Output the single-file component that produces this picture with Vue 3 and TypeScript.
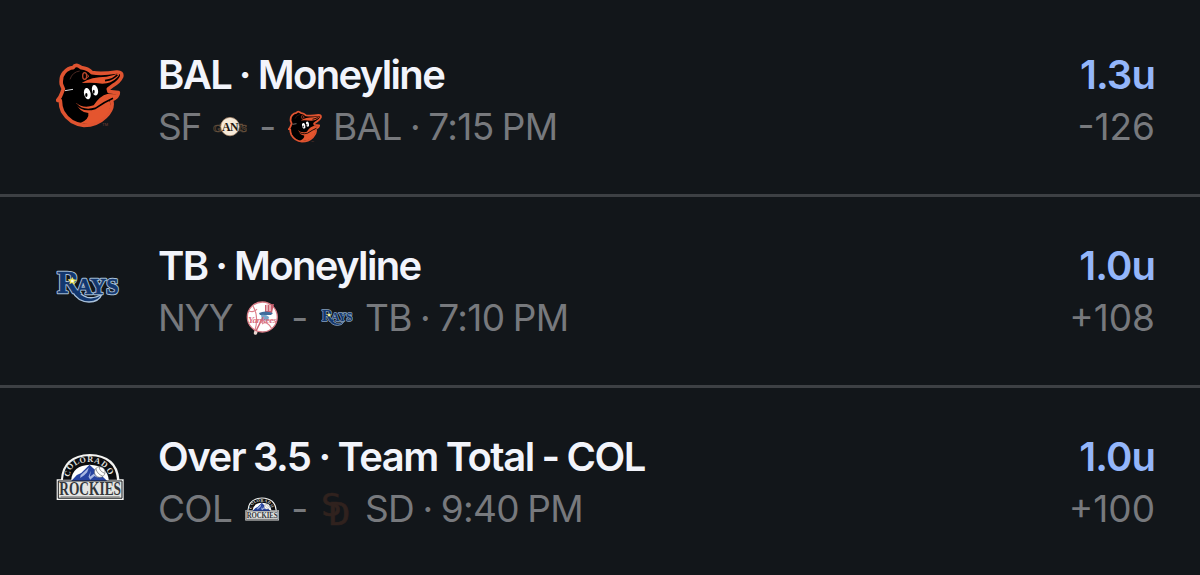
<script setup lang="ts">
interface Side {
  code: string
  logo: string
}

interface Bet {
  id: string
  title: string
  logo: string
  away: Side
  home: Side
  time: string
  units: string
  odds: string
}

const bets: Bet[] = [
  { id: 'bal', title: 'BAL · Moneyline', logo: 'orioles', away: { code: 'SF', logo: 'giants' }, home: { code: 'BAL', logo: 'orioles' }, time: '7:15 PM', units: '1.3u', odds: '-126' },
  { id: 'tb', title: 'TB · Moneyline', logo: 'rays', away: { code: 'NYY', logo: 'yankees' }, home: { code: 'TB', logo: 'rays' }, time: '7:10 PM', units: '1.0u', odds: '+108' },
  { id: 'col', title: 'Over 3.5 · Team Total - COL', logo: 'rockies', away: { code: 'COL', logo: 'rockies' }, home: { code: 'SD', logo: 'padres' }, time: '9:40 PM', units: '1.0u', odds: '+100' },
]
</script>

<template>
  <svg class="sprite" aria-hidden="true">
    <symbol id="orioles" viewBox="33 36 204 204">
      <path d="M55 117 L49 103 Q46 80 58 67 Q69 54 84 53 Q91 42 101 48 L109 53 Q129 55 141 68 Q170 73 215 66 Q233 65 230 80 Q224 95 203 107 L190 117 L192 125 L220 128 Q220 141 199 150 Q208 174 182 200 Q156 226 117 226 Q74 222 53 185 Q46 170 46 152 L38 151 Q46 142 50 130 Z" fill="#000" stroke="#df5330" stroke-width="11" stroke-linejoin="round" />
      <path d="M110 99 Q139 80 184 80 Q204 78 220 70 Q226 75 215 84 Q199 101 172 101 Q143 96 110 99Z" fill="#e4552e" />
      <path d="M180 92 Q206 88 217 74" fill="none" stroke="#000" stroke-width="5" />
      <path d="M93 158 Q114 177 146 166 Q165 137 187 132 L220 133 Q211 147 192 151 Q204 167 184 195 Q154 227 105 220 Q134 207 130 189 Q103 187 93 158Z" fill="#e4552e" />
      <path d="M93 162 Q114 186 151 175 Q177 157 204 145" fill="none" stroke="#000" stroke-width="5" />
      <path d="M75 88 Q82 66 104 63" fill="none" stroke="#4a2822" stroke-width="3" />
      <path d="M60 122 L84 118" stroke="#ddd" stroke-width="3" />
      <ellipse cx="127" cy="131" rx="10" ry="17" fill="#fff" transform="rotate(-12 127 131)" />
      <ellipse cx="150" cy="121" rx="9" ry="16" fill="#fff" transform="rotate(-12 150 121)" />
      <ellipse cx="124" cy="135" rx="3.5" ry="6" fill="#000" />
      <ellipse cx="146" cy="125" rx="3" ry="6" fill="#000" />
      <ellipse cx="119" cy="78" rx="6" ry="10" fill="none" stroke="#b8452a" stroke-width="4" />
      <path d="M124 72 L132 79 L124 84" fill="none" stroke="#b8452a" stroke-width="3" />
      <text x="172" y="228" class="mark">TM</text>
    </symbol>

    <symbol id="rays" viewBox="34 42 192 102">
      <g class="rays-type halo">
        <text x="38" y="112" font-size="96" textLength="66" lengthAdjust="spacingAndGlyphs">R</text>
        <text x="95" y="113" font-size="72" textLength="127" lengthAdjust="spacingAndGlyphs">AYS</text>
      </g>
      <path d="M82 105 Q98 137 133 138 Q163 138 172 114 Q149 129 128 124 Q109 119 99 101Z" fill="#12376f" stroke="#a9c1da" stroke-width="4" />
      <g class="rays-type">
        <text x="38" y="112" font-size="96" textLength="66" lengthAdjust="spacingAndGlyphs">R</text>
        <text x="95" y="113" font-size="72" textLength="127" lengthAdjust="spacingAndGlyphs">AYS</text>
      </g>
      <path d="M83 63 L87 70 L97 72 L89 77 L90 87 L82 81 L74 85 L76 77 L69 70 L79 70Z" fill="#f0e356" />
      <circle cx="83" cy="75" r="4" fill="#fffff0" />
    </symbol>

    <symbol id="rockies" viewBox="33 38 205 142">
      <path d="M35 116 H48 Q53 43 135 40 Q218 43 224 116 H237 V178 H35Z" fill="#f4f4f2" />
      <path d="M54 117 Q59 49 135 46 Q211 49 217 117Z" fill="#0c0d10" />
      <path d="M79 118 Q82 75 135 72 Q188 75 192 118Z" fill="#fff" />
      <path d="M76 124 L96 103 L109 97 L134 72 L151 88 L178 112 L194 128 Z" fill="#2743a0" />
      <path d="M107 104 L132 80 L127 95 L118 104 L106 112Z M138 90 L135 108 L147 99 L160 112 L149 106 L136 117 L131 108Z" fill="#a9b8e2" />
      <circle cx="165" cy="94" r="16" fill="#fff" stroke="#777" stroke-width="2" />
      <path d="M153 83 Q157 101 174 106 M164 79 Q162 90 180 98" fill="none" stroke="#666" stroke-width="2" />
      <g class="arch">
        <text transform="translate(72 110) rotate(-72)">C</text>
        <text transform="translate(76 90) rotate(-53)">O</text>
        <text transform="translate(91 75) rotate(-33)">L</text>
        <text transform="translate(106 68) rotate(-16)">O</text>
        <text transform="translate(127 65) rotate(0)">R</text>
        <text transform="translate(147 65) rotate(18)">A</text>
        <text transform="translate(167 72) rotate(36)">D</text>
        <text transform="translate(184 87) rotate(58)">O</text>
      </g>
      <path d="M40 121 H232 V173 H40Z" fill="#e4e5e3" stroke="#17191c" stroke-width="3" />
      <text x="43" y="164" class="rockies-type" textLength="186" lengthAdjust="spacingAndGlyphs">ROCKIES</text>
      <path d="M47 169 H225" stroke="#444" stroke-width="2" />
    </symbol>

    <symbol id="giants" viewBox="0 0 34 34">
      <g class="giants-side">
        <text x="0" y="22" font-size="11">G</text>
        <text x="6.5" y="21" font-size="10">I</text>
        <text x="23" y="21" font-size="10">T</text>
        <text x="28" y="22" font-size="11">S</text>
      </g>
      <circle cx="17" cy="16.6" r="9.2" fill="#f6ead9" stroke="#bd9878" stroke-width=".7" />
      <text x="9" y="21" class="giants-type" textLength="16" lengthAdjust="spacingAndGlyphs">AN</text>
    </symbol>

    <symbol id="yankees" viewBox="0 0 34 36">
      <path d="M12 28 L10.5 33" stroke="#ead5cf" stroke-width="3.4" stroke-linecap="round" />
      <circle cx="17.3" cy="17" r="15" fill="#fff" stroke="#d77b86" stroke-width="1.3" />
      <path d="M8 6 Q14 16 10 30 M27 29 Q22 20 17 24 M4 11 Q9 13 12 9" fill="none" stroke="#dc7f8a" stroke-width="1.1" />
      <path d="M11 31 L20 13" stroke="#ce6573" stroke-width="1.6" />
      <path d="M20 5 L29 4 L27 13 L20 12Z" fill="#c9606f" />
      <path d="M22 5 L22 11 M25 5 L25 11" stroke="#fff" stroke-width="1" />
      <path d="M14 13 Q20 10 28 13 L26 15 L15 15Z" fill="#3f6c9c" />
      <path d="M16 15 Q21 14 24 17 L23 21 L17 20Z" fill="#77a5ca" />
      <text x="3" y="23" class="yankees-type" textLength="28" lengthAdjust="spacingAndGlyphs">Yankees</text>
    </symbol>

    <symbol id="padres" viewBox="0 0 34 34">
      <g class="padres-type">
        <text x="1" y="24" textLength="20" lengthAdjust="spacingAndGlyphs">S</text>
        <text x="8.5" y="32.5" textLength="21" lengthAdjust="spacingAndGlyphs">D</text>
      </g>
    </symbol>
  </svg>

  <main class="bets">
    <article v-for="bet in bets" :key="bet.id" class="bet" :class="bet.id">
      <svg class="team-logo" :class="bet.logo"><use :href="'#' + bet.logo" /></svg>
      <div class="details">
        <h2 class="title">{{ bet.title }}</h2>
        <div class="matchup">
          <span class="away">{{ bet.away.code }}</span>
          <svg class="small-logo" :class="bet.away.logo"><use :href="'#' + bet.away.logo" /></svg>
          <span class="dash">-</span>
          <svg class="small-logo" :class="bet.home.logo"><use :href="'#' + bet.home.logo" /></svg>
          <span class="home">{{ bet.home.code }} · {{ bet.time }}</span>
        </div>
      </div>
      <div class="stake">
        <strong class="units">{{ bet.units }}</strong>
        <span class="odds">{{ bet.odds }}</span>
      </div>
    </article>
  </main>
</template>

<style>
body {
  margin: 0;
  overflow: hidden;
  background: #12161a;
}
</style>

<style scoped>
.sprite {
  position: absolute;
  width: 0;
  height: 0;
}

.bets {
  box-sizing: border-box;
  height: 575px;
  padding-top: 6px;
  overflow: hidden;
  background: #12161a;
  font-family: Inter, "Liberation Sans", sans-serif;
}

.bet {
  box-sizing: border-box;
  display: flex;
  align-items: flex-start;
  height: 191px;
  padding: 42px 45px 0 56px;
  border-bottom: 3px solid #3d4044;
}

.team-logo {
  flex: none;
  width: 68px;
  height: 68px;
  margin: 14px 34px 0 0;
}

.team-logo.rays {
  width: 64px;
  margin-right: 38px;
  margin-top: 14px;
}

.team-logo.rockies {
  margin-top: 13px;
}

.details {
  flex: 1;
}

.title,
.units {
  display: block;
  height: 53px;
  margin: 0;
  font-size: 40px;
  font-weight: 600;
  line-height: 53px;
  white-space: nowrap;
}

.title {
  color: #f2f4fb;
  letter-spacing: -1.65px;
  word-spacing: -0.7px;
}

.col .title {
  letter-spacing: -1.5px;
}

.matchup {
  display: flex;
  align-items: center;
  height: 52px;
  color: #77797d;
  font-size: 37px;
  line-height: 52px;
  letter-spacing: -0.65px;
  white-space: nowrap;
}

.away {
  width: 55px;
  letter-spacing: -1.3px;
}

.tb .away,
.col .away {
  width: 87px;
}

.col .away {
  letter-spacing: -0.7px;
}

.small-logo {
  flex: none;
  width: 34px;
  height: 34px;
}

.small-logo.yankees {
  height: 36px;
}

.small-logo.rays {
  width: 32px;
  margin: 0 1px;
}

.dash {
  width: 41px;
  text-align: center;
}

.home {
  margin-left: 11px;
  word-spacing: -1.5px;
}

.stake {
  text-align: right;
}

.units {
  color: #94b6fa;
  letter-spacing: -0.9px;
}

.odds {
  display: block;
  color: #77797d;
  font-size: 37px;
  line-height: 52px;
}

.mark {
  fill: #7d4236;
  font: 12px "Liberation Sans", sans-serif;
}

.rays-type {
  fill: #12376f;
  font-family: "Liberation Serif", serif;
  font-weight: 700;
  stroke: #12376f;
  stroke-width: 2px;
}

.halo {
  stroke: #a9c1da;
  stroke-width: 8px;
  stroke-linejoin: round;
}

.arch {
  fill: #deded8;
  font: 700 25px "Liberation Serif", serif;
}

.rockies-type {
  fill: #33363a;
  font: 700 55px "Liberation Serif", serif;
}

.giants-side {
  fill: #2b2119;
  stroke: #65503d;
  stroke-width: 0.6px;
  font-family: "Liberation Serif", serif;
  font-weight: 700;
}

.giants-type {
  fill: #21170f;
  font: 700 13px "Liberation Serif", serif;
}

.yankees-type {
  fill: #d9707f;
  font: italic 700 9px "Liberation Serif", serif;
}

.padres-type {
  fill: #30221e;
  stroke: #30221e;
  stroke-width: 0.6px;
  font: 400 32px "DejaVu Sans Mono", monospace;
}
</style>
